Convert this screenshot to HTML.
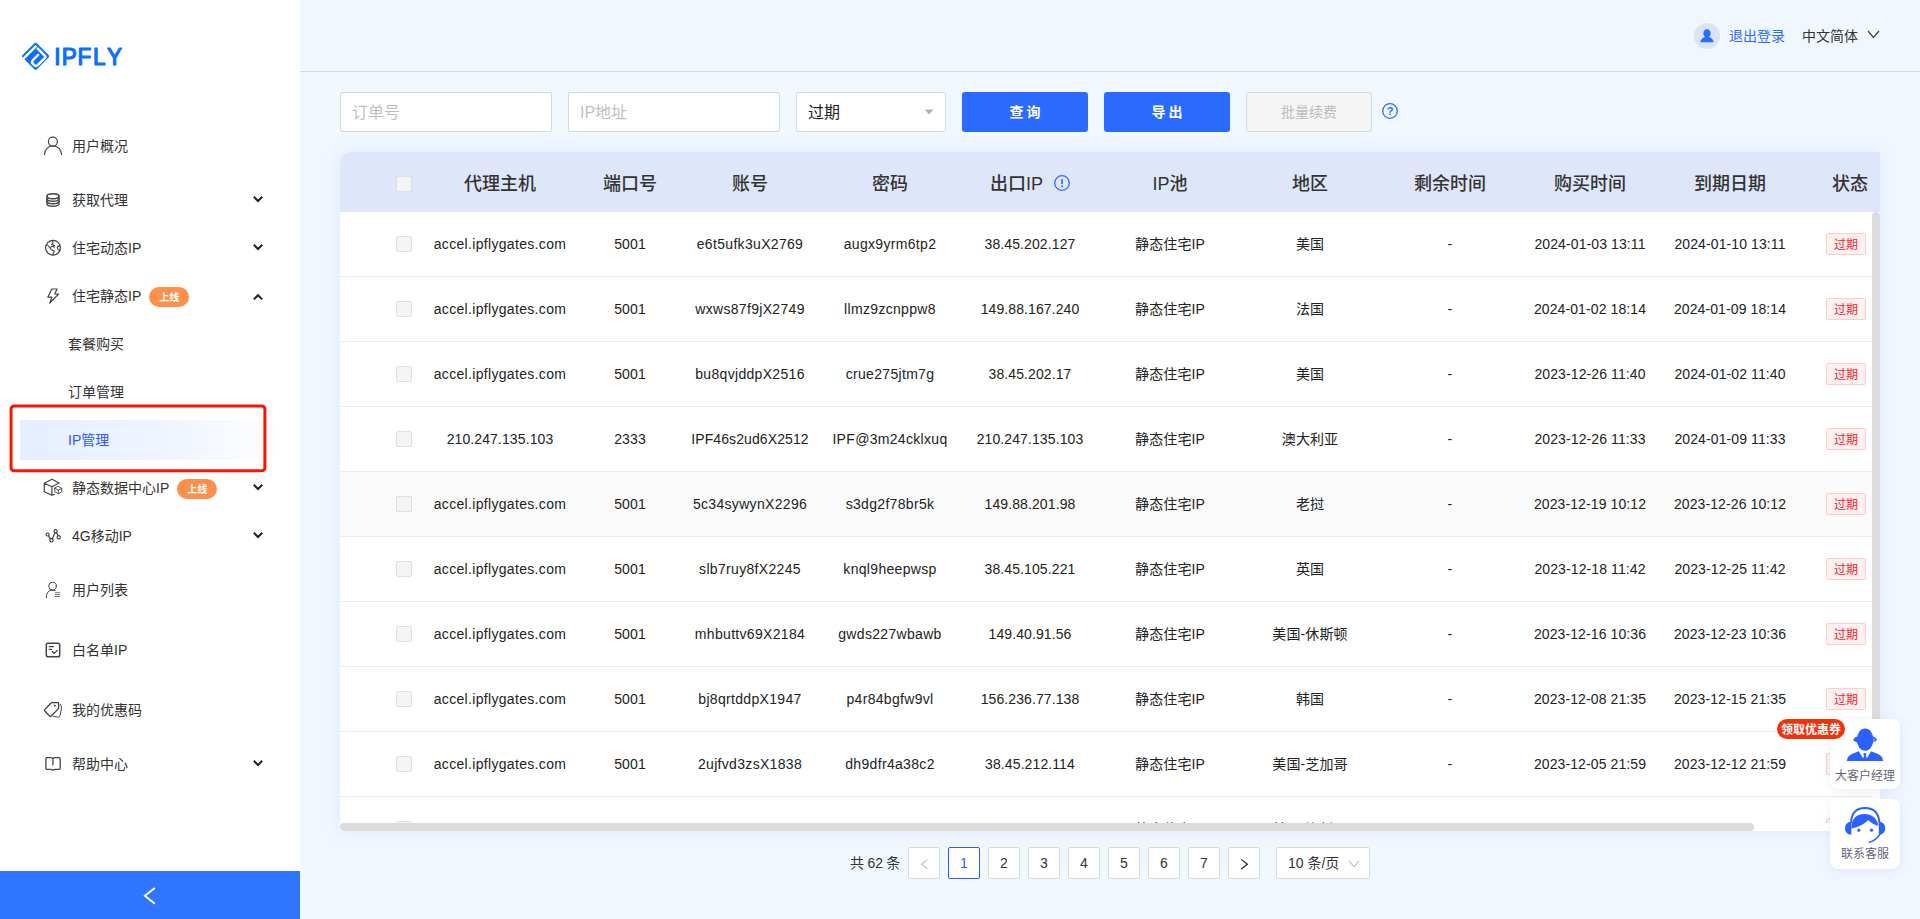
<!DOCTYPE html>
<html lang="zh-CN">
<head>
<meta charset="utf-8">
<title>IPFLY - IP管理</title>
<style>
*{box-sizing:border-box;margin:0;padding:0}
html,body{width:1920px;height:919px;overflow:hidden}
body{position:relative;background:#f1f7ff;font-family:"Liberation Sans","Noto Sans CJK SC",sans-serif;font-size:14px;color:#333;-webkit-font-smoothing:antialiased}
svg{display:block}
/* ---------- sidebar ---------- */
#side{position:absolute;left:0;top:0;width:300px;height:919px;background:#fff}
#menu{position:absolute;left:0;top:116px;width:300px}
.mi{position:relative;height:60px;line-height:60px;padding-left:72px;font-size:14px;color:#333;white-space:nowrap}
.mi.sub{height:48px;line-height:48px}
.mi.child{height:48px;line-height:48px;padding-left:68px}
.mi.active{color:#2b5cff}
.mi.active:before{content:"";position:absolute;left:20px;top:4px;width:262px;height:40px;background:linear-gradient(90deg,#e6effe 0%,#f0f5ff 60%,#ffffff 100%);z-index:0}
.mi span{position:relative}
i{font-style:normal}
.tag-on{display:inline-block;position:relative;top:0;margin-left:8px;height:20px;line-height:22px;overflow:hidden;padding:0 10px;border-radius:10px;background:#ff904c;color:#fff;font-size:10px;font-weight:700;vertical-align:middle}
#collapse{position:absolute;left:0;top:871px;width:300px;height:48px;background:#3076ff}
#collapse svg{position:absolute;left:143px;top:14px}
/* ---------- header ---------- */
#hdr{position:absolute;left:300px;top:0;width:1620px;height:72px;border-bottom:1px solid #d6d9e8}
#avatar{position:absolute;left:1394px;top:23px;width:26px;height:26px;border-radius:50%;background:#d9e4f6}
#logout{position:absolute;left:1429px;top:26px;line-height:20px;color:#2b6bff;font-size:14px}
#lang{position:absolute;left:1502px;top:26px;line-height:20px;color:#333;font-size:14px}
#langarr{position:absolute;left:1566.5px;top:30.4px}
/* ---------- filters ---------- */
.inp{position:absolute;top:92px;height:40px;background:#fff;border:1px solid #d9d9d9;border-radius:2px;line-height:40px;padding-left:11px;font-size:16px;color:#bfbfbf}
.btn{position:absolute;top:92px;height:40px;width:126px;border-radius:3px;background:#2a6aff;color:#fff;font-size:14px;font-weight:700;text-align:center;line-height:40px;letter-spacing:3px;text-indent:3px}
.btn.dis{background:#f5f5f5;border:1px solid #d9d9d9;color:#bdbdbd;font-weight:400;letter-spacing:0;text-indent:0;line-height:38px}
/* ---------- table ---------- */
#tbl{position:absolute;left:340px;top:152px;width:1540px;height:679px;background:#fff;border-radius:12px 0 0 0;overflow:hidden;box-shadow:0 0 16px rgba(125,165,240,.17)}
.row{position:absolute;left:0;width:1560px;height:65px;border-bottom:1px solid #ececec;display:grid;grid-template-columns:80px 160px 100px 140px 140px 140px 140px 140px 140px 140px 140px 100px;align-items:center;text-align:center;font-size:14px;line-height:20px;color:#222;white-space:nowrap;letter-spacing:.1px}
.row .a{letter-spacing:.32px}
.row.alt{background:#fafafa}
.row.head{top:0;height:60px;background:#dfe6f9;border-bottom:none;font-size:18px;line-height:26px;font-weight:500;color:#333;letter-spacing:0;padding-top:4px}
.cb{display:block;width:16px;height:16px;border:1px solid #dcdfe6;border-radius:2px;background:#f5f5f5;margin-left:56px}
.st{display:inline-block;vertical-align:top;width:40px;height:22px;line-height:23px;border:1px solid #ffccc7;background:#fff1f0;color:#f5222d;font-size:12px;border-radius:2px;margin-left:-8px;letter-spacing:0}
#vbar{position:absolute;left:1532px;top:60px;width:8px;height:560px;background:#dcdcdc;border-radius:4px 4px 0 0}
#hbar{position:absolute;left:0;top:671px;width:1414px;height:8px;background:#dcdcdc;border-radius:4px}
/* ---------- pagination ---------- */
#pg{position:absolute;left:850px;top:847px;height:32px;line-height:32px;font-size:14px;color:#333;white-space:nowrap;word-spacing:-.5px}
.pi{position:absolute;top:847px;width:32px;height:32px;line-height:30px;border:1px solid #d9d9d9;border-radius:2px;background:#fff;text-align:center;font-size:14px;color:#333}
.pi.on{border-color:#2b5cff;color:#2b5cff}
/* ---------- floats ---------- */
.fl{position:absolute;left:1830px;width:70px;height:70px;background:#fff;border-radius:8px;box-shadow:0 2px 10px rgba(120,140,190,.15);text-align:center;font-size:12px;color:#66667a}
.fl span{position:absolute;left:0;width:70px;top:48px;line-height:18px}
#coupon{position:absolute;left:1777px;top:719px;width:68px;height:20px;border-radius:10px;background:#f5300c;color:#fff;font-size:12px;font-weight:700;line-height:22px;text-align:center;overflow:hidden}
</style>
</head>
<body>
<div id="side">
  <svg id="sideart" width="300" height="919" viewBox="0 0 300 919" style="position:absolute;left:0;top:0;z-index:3">
    <!-- logo mark -->
    <g transform="translate(35.6 56.3) rotate(-45) scale(1.065) translate(-9.5 -9.5)">
      <rect x="0" y="0" width="19" height="19" rx="1.7" fill="#0d6efd"/>
      <rect x="-2" y="1.9" width="19.1" height="2.2" rx="0.5" fill="#fff"/>
      <path d="M16 5.2 V15.8 Q16 16.8 15 16.8 H5.3 Q2.7 16.8 2.7 14.2 V12.8 Q2.7 10.2 5.3 10.2 H12.2" fill="none" stroke="#fff" stroke-width="2.25" stroke-linecap="round"/>
      <rect x="14.7" y="4.1" width="2.5" height="0.75" fill="#0d6efd"/>
    </g>
    <!-- logo word -->
    <text transform="translate(0 64.85) scale(0.97 1)" x="55.88 63.61 79.79 95.9 110.4" y="0" font-family="'Liberation Sans',sans-serif" font-size="23.3" fill="#0d6efd" stroke="#0d6efd" stroke-width="1.25" stroke-linejoin="round">IPFLY</text>
    <g fill="none" stroke="#444" stroke-width="1.2" stroke-linecap="round" stroke-linejoin="round">
      <!-- user -->
      <circle cx="52.9" cy="141.6" r="4.5"/>
      <path d="M44.5 154.4 A8.5 8.5 0 0 1 61.5 154.4"/>
      <!-- database -->
      <g stroke-width="1.4">
      <ellipse cx="53" cy="196.2" rx="6" ry="2.5"/>
      <path d="M47 196.2 V203.8 A6 2.5 0 0 0 59 203.8 V196.2"/>
      <path d="M47 198.8 A6 2.5 0 0 0 59 198.8"/>
      <path d="M47 201.3 A6 2.5 0 0 0 59 201.3"/>
      </g>
      <!-- globe -->
      <circle cx="53" cy="247.8" r="7.4"/>
      <path d="M52.4 240.8 L53.2 242.8 L51.6 244.4 L54.4 245.4 L49.8 247.6 L51.2 249.8 L54.4 251.2 L53.2 253.2 V255 M47.4 245 L49.8 247.6 M53.8 245.8 L54.2 247.6 M59.8 245.6 Q57 246.4 57.4 248.2 Q57.8 250 60 250.6" stroke-width="1.1"/>
      <!-- lightning -->
      <path d="M51.8 289 H57 L54.8 294 H58.6 L49.8 303.2 L51.8 297.2 H47.8 Z"/>
      <!-- cube -->
      <path d="M51.9 479.2 L59.2 483 L51.9 486.7 L44.3 483.2 Z M44.3 483.2 V491.7 L51.9 495.3 V486.7 M51.9 495.3 L54.4 494.2"/>
      <path d="M58.3 486.5 L61.8 488.3 V491.8 L58.3 493.7 L54.7 491.8 V488.3 Z M54.7 488.3 L58.3 490.1 L61.8 488.3 M58.3 490.1 V493.7" stroke-width="0.9"/>
      <!-- nodes -->
      <circle cx="47.6" cy="534.5" r="1.5"/><circle cx="51.5" cy="540.3" r="1.7"/><circle cx="55.6" cy="531.3" r="1.6"/><circle cx="58.7" cy="537.2" r="1.6"/>
      <path d="M48.5 535.8 L50.5 538.9 M52.3 538.8 L55 532.8 M56.4 532.8 L58.1 535.7"/>
      <!-- user list -->
      <circle cx="52.5" cy="586.1" r="3.85" stroke-width="1"/>
      <path d="M46.4 597.6 Q46 592 50.4 590.3 M50.6 590.2 L55.2 590.5" stroke-width="1"/>
      <path d="M55.3 592.7 H59.8 M55.3 594.6 H59.8 M55.3 596.5 H59.8" stroke-width="0.9" stroke="#666"/>
      <!-- whitelist -->
      <rect x="46.3" y="643.3" width="13.4" height="13.4" rx="1.8" stroke-width="1.5"/>
      <path d="M49.2 646.6 H53.6 M49.2 649.4 H51.4 M52.2 651.6 L54.2 653.4 L57.4 650.4" stroke-width="1.3"/>
      <!-- tag -->
      <path d="M51.7 702.6 H57.8 Q58.6 702.6 58.6 703.4 V708.2 Q58.6 708.6 58.3 708.9 L51.2 716 Q50.4 716.8 49.6 716 L44.8 711 Q44.1 710.2 44.8 709.5 L51 703 Q51.3 702.6 51.7 702.6 Z" stroke-width="1.3"/>
      <path d="M60.3 704.2 Q61.8 706 61.5 708.4 L60.2 715.2 Q59.8 717.4 57.8 717.2 L53.4 716.2" stroke-width="1"/>
      <circle cx="54.7" cy="705.6" r="0.7" stroke-width="1"/>
      <!-- book -->
      <path d="M52.95 758.7 Q52.2 757.7 50.6 757.7 H46.9 Q45.9 757.7 45.9 758.7 V768.3 Q45.9 769.3 46.9 769.3 H50.8 Q51.9 769.3 52.95 770.2 Q54 769.3 55.1 769.3 H59.2 Q60.2 769.3 60.2 768.3 V758.7 Q60.2 757.7 59.2 757.7 H55.3 Q53.7 757.7 52.95 758.7 V764.8" stroke-width="1.3"/>
    </g>
    <rect x="11.05" y="405.9" width="253.85" height="64.95" rx="3.2" fill="none" stroke="#fe1206" stroke-width="3"/>
    <!-- arrows -->
    <g fill="none" stroke="#222" stroke-width="2" stroke-linejoin="miter">
      <path d="M253.8 196.8 L258 201 L262.2 196.8"/>
      <path d="M253.8 244.8 L258 249 L262.2 244.8"/>
      <path d="M253.8 299.4 L258 295.2 L262.2 299.4"/>
      <path d="M253.8 484.8 L258 489 L262.2 484.8"/>
      <path d="M253.8 532.8 L258 537 L262.2 532.8"/>
      <path d="M253.8 760.8 L258 765 L262.2 760.8"/>
    </g>
  </svg>
  <div id="menu">
    <div class="mi"><span>用户概况</span></div>
    <div class="mi sub"><span>获取代理</span></div>
    <div class="mi sub"><span>住宅动态IP</span></div>
    <div class="mi sub"><span>住宅静态IP</span><i class="tag-on">上线</i></div>
    <div class="mi child"><span>套餐购买</span></div>
    <div class="mi child"><span>订单管理</span></div>
    <div class="mi child active"><span>IP管理</span></div>
    <div class="mi sub"><span>静态数据中心IP</span><i class="tag-on">上线</i></div>
    <div class="mi sub"><span>4G移动IP</span></div>
    <div class="mi"><span>用户列表</span></div>
    <div class="mi"><span>白名单IP</span></div>
    <div class="mi"><span>我的优惠码</span></div>
    <div class="mi sub"><span>帮助中心</span></div>
  </div>
  <div id="collapse"><svg width="16" height="22" viewBox="0 0 16 22"><path d="M11.8 2.9 L1.9 10.8 L11.8 18.7" fill="none" stroke="#fff" stroke-width="1.9"/></svg></div>
</div>

<div id="hdr">
  <div id="avatar"><svg width="26" height="26" viewBox="0 0 26 26"><path d="M13 6.2 C15.4 6.2 16.6 8 16.6 10.2 C16.6 11.8 15.9 13.2 15 14 C17.6 14.8 19.4 16.6 19.6 19.2 H6.4 C6.6 16.6 8.4 14.8 11 14 C10.1 13.2 9.4 11.8 9.4 10.2 C9.4 8 10.6 6.2 13 6.2 Z" fill="#2b6bff"/></svg></div>
  <div id="logout">退出登录</div>
  <div id="lang">中文简体</div>
  <svg id="langarr" width="13" height="9" viewBox="0 0 13 9"><path d="M1 1 L6.5 7.5 L12 1" fill="none" stroke="#444" stroke-width="1.3"/></svg>
</div>

<div class="inp" style="left:340px;width:212px">订单号</div>
<div class="inp" style="left:568px;width:212px">IP地址</div>
<div class="inp" style="left:796px;width:150px;color:#222">过期</div>
<div class="btn" style="left:962px">查询</div>
<div class="btn" style="left:1104px">导出</div>
<div class="btn dis" style="left:1246px">批量续费</div>
<svg style="position:absolute;left:924px;top:109px" width="10" height="6" viewBox="0 0 10 6"><path d="M0.6 0.6 H9.4 L5 5.4 Z" fill="#b3b3b3"/></svg>
<svg style="position:absolute;left:1381px;top:102px" width="18" height="18" viewBox="0 0 18 18"><circle cx="9" cy="9" r="7.3" fill="none" stroke="#2b6bff" stroke-width="1.3"/><text x="9" y="13" text-anchor="middle" font-family="'Liberation Sans',sans-serif" font-size="11" font-weight="700" fill="#2b6bff">?</text></svg>

<div id="tbl">
  <div class="row head"><div><i class="cb"></i></div><div>代理主机</div><div>端口号</div><div>账号</div><div>密码</div><div>出口IP<svg width="16" height="16" viewBox="0 0 16 16" style="display:inline-block;vertical-align:top;margin:4px 0 0 11px"><circle cx="8" cy="8" r="7.3" fill="none" stroke="#2b6bff" stroke-width="1.3"/><path d="M8 4.2 V8.9" stroke="#2b6bff" stroke-width="1.7" fill="none"/><circle cx="8" cy="11.3" r="1" fill="#2b6bff"/></svg></div><div>IP池</div><div>地区</div><div>剩余时间</div><div>购买时间</div><div>到期日期</div><div>状态</div></div>
  <div class="row" style="top:60px"><div><i class="cb"></i></div><div class="a">accel.ipflygates.com</div><div>5001</div><div class="a">e6t5ufk3uX2769</div><div class="a">augx9yrm6tp2</div><div>38.45.202.127</div><div>静态住宅IP</div><div>美国</div><div>-</div><div>2024-01-03 13:11</div><div>2024-01-10 13:11</div><div><i class="st">过期</i></div></div>
  <div class="row" style="top:125px"><div><i class="cb"></i></div><div class="a">accel.ipflygates.com</div><div>5001</div><div class="a">wxws87f9jX2749</div><div class="a">llmz9zcnppw8</div><div>149.88.167.240</div><div>静态住宅IP</div><div>法国</div><div>-</div><div>2024-01-02 18:14</div><div>2024-01-09 18:14</div><div><i class="st">过期</i></div></div>
  <div class="row" style="top:190px"><div><i class="cb"></i></div><div class="a">accel.ipflygates.com</div><div>5001</div><div class="a">bu8qvjddpX2516</div><div class="a">crue275jtm7g</div><div>38.45.202.17</div><div>静态住宅IP</div><div>美国</div><div>-</div><div>2023-12-26 11:40</div><div>2024-01-02 11:40</div><div><i class="st">过期</i></div></div>
  <div class="row" style="top:255px"><div><i class="cb"></i></div><div>210.247.135.103</div><div>2333</div><div>IPF46s2ud6X2512</div><div class="a">IPF@3m24cklxuq</div><div>210.247.135.103</div><div>静态住宅IP</div><div>澳大利亚</div><div>-</div><div>2023-12-26 11:33</div><div>2024-01-09 11:33</div><div><i class="st">过期</i></div></div>
  <div class="row alt" style="top:320px"><div><i class="cb"></i></div><div class="a">accel.ipflygates.com</div><div>5001</div><div class="a">5c34sywynX2296</div><div class="a">s3dg2f78br5k</div><div>149.88.201.98</div><div>静态住宅IP</div><div>老挝</div><div>-</div><div>2023-12-19 10:12</div><div>2023-12-26 10:12</div><div><i class="st">过期</i></div></div>
  <div class="row" style="top:385px"><div><i class="cb"></i></div><div class="a">accel.ipflygates.com</div><div>5001</div><div class="a">slb7ruy8fX2245</div><div class="a">knql9heepwsp</div><div>38.45.105.221</div><div>静态住宅IP</div><div>英国</div><div>-</div><div>2023-12-18 11:42</div><div>2023-12-25 11:42</div><div><i class="st">过期</i></div></div>
  <div class="row" style="top:450px"><div><i class="cb"></i></div><div class="a">accel.ipflygates.com</div><div>5001</div><div class="a">mhbuttv69X2184</div><div class="a">gwds227wbawb</div><div>149.40.91.56</div><div>静态住宅IP</div><div>美国-休斯顿</div><div>-</div><div>2023-12-16 10:36</div><div>2023-12-23 10:36</div><div><i class="st">过期</i></div></div>
  <div class="row" style="top:515px"><div><i class="cb"></i></div><div class="a">accel.ipflygates.com</div><div>5001</div><div class="a">bj8qrtddpX1947</div><div class="a">p4r84bgfw9vl</div><div>156.236.77.138</div><div>静态住宅IP</div><div>韩国</div><div>-</div><div>2023-12-08 21:35</div><div>2023-12-15 21:35</div><div><i class="st">过期</i></div></div>
  <div class="row" style="top:580px"><div><i class="cb"></i></div><div class="a">accel.ipflygates.com</div><div>5001</div><div class="a">2ujfvd3zsX1838</div><div class="a">dh9dfr4a38c2</div><div>38.45.212.114</div><div>静态住宅IP</div><div>美国-芝加哥</div><div>-</div><div>2023-12-05 21:59</div><div>2023-12-12 21:59</div><div><i class="st">过期</i></div></div>
  <div class="row" style="top:645px"><div><i class="cb"></i></div><div class="a">accel.ipflygates.com</div><div>5001</div><div class="a">dk7mpwq2hX1792</div><div class="a">tb6hn3wk8dlf</div><div>38.45.198.64</div><div>静态住宅IP</div><div>美国-洛杉矶</div><div>-</div><div>2023-12-02 16:20</div><div>2023-12-09 16:20</div><div><i class="st">过期</i></div></div>
  <div style="position:absolute;left:1532px;top:60px;width:8px;height:619px;background:#fff"></div>
  <div id="vbar"></div>
  <div style="position:absolute;left:0;top:671px;width:1540px;height:8px;background:#fff"></div>
  <div id="hbar"></div>
</div>

<div id="pg">共 62 条</div>
<div class="pi" style="left:908px"><svg width="30" height="30" viewBox="0 0 30 30"><path d="M18.6 11.6 L12.4 16.2 L18.6 20.8" fill="none" stroke="#c0c0c0" stroke-width="1.1"/></svg></div>
<div class="pi on" style="left:948px">1</div>
<div class="pi" style="left:988px">2</div>
<div class="pi" style="left:1028px">3</div>
<div class="pi" style="left:1068px">4</div>
<div class="pi" style="left:1108px">5</div>
<div class="pi" style="left:1148px">6</div>
<div class="pi" style="left:1188px">7</div>
<div class="pi" style="left:1228px"><svg width="30" height="30" viewBox="0 0 30 30"><path d="M12.2 11.4 L18.4 16.2 L12.2 21" fill="none" stroke="#222" stroke-width="1.2"/></svg></div>
<div class="pi" style="left:1276px;width:94px;text-align:left;padding-left:11px">10 条/页<svg width="12" height="8" viewBox="0 0 12 8" style="position:absolute;left:71px;top:11.5px"><path d="M1 0.8 L6 6.6 L11 0.8" fill="none" stroke="#bfbfbf" stroke-width="1.1"/></svg></div>

<div class="fl" style="top:719px"><svg width="70" height="70" viewBox="1830 719 70 70" style="position:absolute;left:0;top:0">
  <g fill="#2b62ff">
    <ellipse cx="1865.1" cy="739.6" rx="8.3" ry="11.2"/>
    <path d="M1857.2 736.2 L1854 738.2 Q1852.8 739.6 1854 741 L1857.6 742.8 Z"/>
    <path d="M1873 736.2 L1876.2 738.2 Q1877.4 739.6 1876.2 741 L1872.6 742.8 Z"/>
    <path d="M1846.7 761 Q1847.4 755.6 1853 753.6 L1858.8 751.2 L1862.6 757.8 L1863.4 757.8 L1864 755.4 L1863.2 754 L1864.9 752.8 L1866.6 754 L1865.8 755.4 L1866.4 757.8 L1867.2 757.8 L1871 751.2 L1876.8 753.6 Q1882.6 755.6 1883.3 761 Z"/>
  </g>
  <path d="M1874 738.4 Q1874.6 746 1869.6 749.8" fill="none" stroke="#fff" stroke-width="0.55"/>
</svg><span>大客户经理</span></div>
<div class="fl" style="top:799px"><svg width="70" height="70" viewBox="1830 799 70 70" style="position:absolute;left:0;top:0">
  <g fill="#2b62ff">
    <path d="M1851.3 821.6 Q1845 822.6 1845 828.2 Q1845 834 1851.3 834.8 Z"/>
    <path d="M1878.8 821.6 Q1885.2 822.6 1885.2 828.2 Q1885.2 834 1878.8 834.8 Z"/>
    <path d="M1851.4 828.6 Q1851.4 814 1864.6 814 Q1875.6 814 1878.6 825.8 Q1872.4 824.6 1868.3 820.1 Q1862.4 826.4 1851.4 828.6 Z"/>
    <circle cx="1858.8" cy="830.2" r="1.6"/><circle cx="1871.5" cy="830.2" r="1.6"/>
  </g>
  <path d="M1851 823 Q1851.6 808 1865 808 Q1878.6 808 1879.4 823" fill="none" stroke="#2b62ff" stroke-width="1.9"/>
  <path d="M1880 834.2 Q1876.6 840 1869.6 842.2" fill="none" stroke="#2b62ff" stroke-width="1.5" stroke-linecap="round"/>
</svg><span style="top:46px">联系客服</span></div>
<div id="coupon">领取优惠券</div>
</body>
</html>
